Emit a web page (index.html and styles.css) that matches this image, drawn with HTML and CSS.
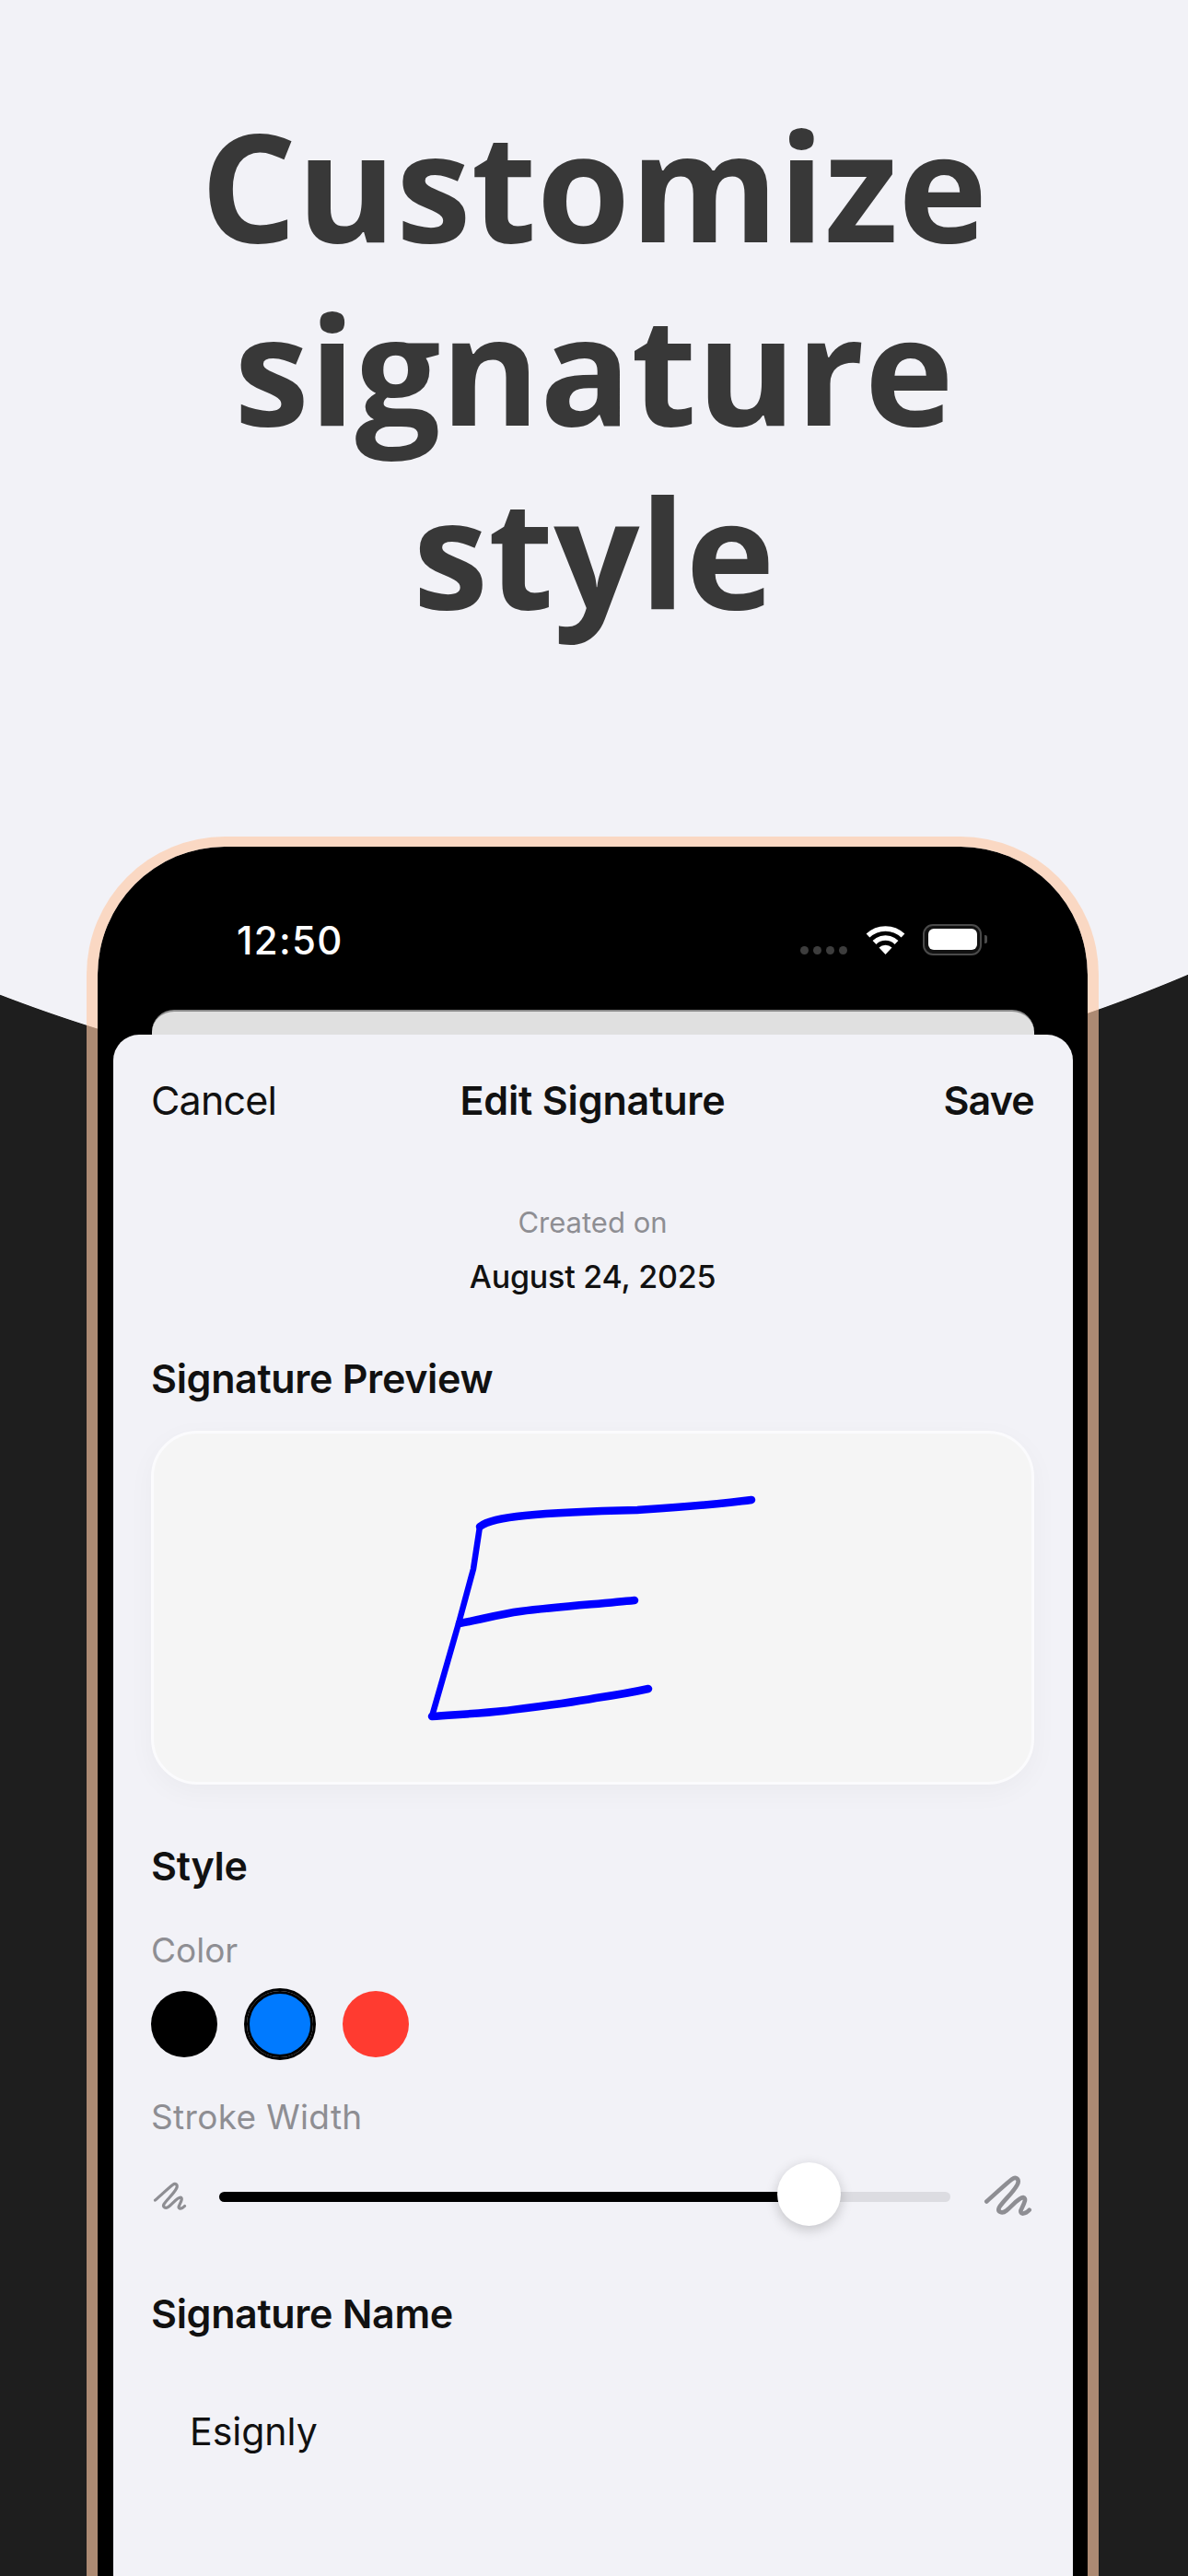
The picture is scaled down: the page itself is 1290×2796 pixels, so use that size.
FILE: index.html
```html
<!DOCTYPE html>
<html lang="en">
<head>
<meta charset="utf-8">
<title>Customize signature style</title>
<link rel="stylesheet" href="styles.css">
</head>
<body>
<main class="page">
  <h1 class="headline">Customize<br>signature<br>style</h1>
  <section class="phone">
    <div class="screen">
      <div class="status">
        <span class="time">12:50</span>
        <div class="status-icons">
          <div class="dots"><i></i><i></i><i></i><i></i></div>
          <svg class="wifi" viewBox="0 0 43 33"><path d="M21.5 33 14.500 25.500a10 10 0 0 1 14 0Z" fill="#fff"/><path d="M9.500 20a17 17 0 0 1 24 0" fill="none" stroke="#fff" stroke-width="5.500"/><path d="M2.500 12.500a27.500 27.500 0 0 1 38 0" fill="none" stroke="#fff" stroke-width="5.500"/></svg>
          <div class="battery"><div class="battery-fill"></div></div>
          <div class="battery-cap"></div>
        </div>
      </div>
      <div class="sheet-back"></div>
      <div class="sheet">
        <nav class="nav">
          <span class="nav-cancel">Cancel</span>
          <span class="nav-title">Edit Signature</span>
          <span class="nav-save">Save</span>
        </nav>
        <div class="created">
          <span class="created-label">Created on</span>
          <span class="created-date">August 24, 2025</span>
        </div>
        <h2 class="heading heading-preview">Signature Preview</h2>
        <div class="preview">
          <svg class="drawing" viewBox="166 1553 955 384">
            <path d="M521 1657C530 1650 548 1647 570 1645C610 1641 650 1640 692 1639C735 1636 780 1633 816 1628"/>
            <path class="drawing-stem" d="M521 1657L514 1703L498 1762L469 1863"/>
            <path d="M499 1762C522 1758 542 1752 565 1749C605 1744 650 1741 689 1737"/>
            <path d="M469 1863C495 1861 520 1860 547 1857C580 1853 615 1849 647 1843C668 1840 686 1837 704 1833"/>
          </svg>
        </div>
        <h2 class="heading heading-style">Style</h2>
        <div class="label label-color">Color</div>
        <div class="swatches">
          <span class="swatch swatch-black"></span>
          <span class="swatch swatch-blue"></span>
          <span class="swatch swatch-red"></span>
        </div>
        <div class="label label-stroke">Stroke Width</div>
        <div class="slider-row">
          <svg class="scribble scribble-small" viewBox="85 60 160 140"><path d="M95 148C125 122 160 88 178 75C192 65 204 75 196 92C182 120 150 145 136 168C130 182 145 190 160 178C180 162 200 135 215 135C230 137 212 165 207 178C205 192 222 190 235 176"/></svg>
          <div class="slider">
            <div class="track-fill"></div>
            <div class="thumb"></div>
            <div class="track-rest"></div>
          </div>
          <svg class="scribble scribble-big" viewBox="85 60 160 140"><path d="M95 148C125 122 160 88 178 75C192 65 204 75 196 92C182 120 150 145 136 168C130 182 145 190 160 178C180 162 200 135 215 135C230 137 212 165 207 178C205 192 222 190 235 176"/></svg>
        </div>
        <h2 class="heading heading-name">Signature Name</h2>
        <div class="name-value">Esignly</div>
      </div>
    </div>
  </section>
</main>
</body>
</html>
```
FILE: styles.css
```css
* { box-sizing: border-box; }
html, body { margin: 0; padding: 0; }
body {
  width: 1290px;
  height: 2796px;
  overflow: hidden;
  font-family: Inter, "Liberation Sans", sans-serif;
  background: radial-gradient(circle 1720px at 618px -525px, #f2f2f7 99.95%, #1e1e1e 100%);
}
.page { height: 2796px; overflow: hidden; display: flex; flex-direction: column; }
.headline {
  margin: 0;
  padding-top: 100px;
  height: 908px;
  font-family: "Open Sans", sans-serif;
  font-weight: 700;
  font-size: 164px;
  line-height: 199px;
  color: #383838;
  text-align: center;
  flex: none;
}
.phone {
  flex: none;
  width: 1099px;
  height: 1950px;
  margin-left: 94px;
  border: solid rgba(255, 201, 164, .63);
  border-width: 11px 12px 12px;
  border-radius: 150px 150px 0 0;
  background: #000;
  background-clip: padding-box;
}
.screen {
  height: 100%;
  padding: 0 16px 0 17px;
  display: flex;
  flex-direction: column;
  overflow: hidden;
  border-radius: 138px 138px 0 0;
}
.status {
  flex: none;
  height: 177px;
  padding: 77px 0 0 134px;
  display: flex;
  justify-content: space-between;
  color: #fff;
}
.time { font-size: 42px; line-height: 50px; font-weight: 500; letter-spacing: 1.3px; }
.status-icons { display: flex; align-items: flex-start; padding: 7px 93px 0 0; }
.dots { display: flex; gap: 5px; margin: 24px 20px 0 0; }
.dots i { width: 9px; height: 9px; border-radius: 50%; background: #3d3d3d; }
.wifi { width: 43px; height: 33px; margin-right: 19px; }
.battery {
  width: 64px; height: 34px; padding: 3px 3px 4px 4px;
  border: 2px solid #4a4a4a; border-radius: 11px; background: #111;
}
.battery-fill { height: 100%; background: #fff; border-radius: 6px; }
.battery-cap { width: 3px; height: 9px; margin: 12px 0 0 3px; background: #4a4a4a; border-radius: 0 2px 2px 0; }
.sheet-back {
  flex: none;
  height: 27px;
  margin: 0 42px;
  background: #e0e0e0;
  border-top: 2px solid #8a8a8a;
  border-radius: 24px 24px 0 0;
}
.sheet {
  flex: 1;
  min-height: 0;
  padding: 0 42px 0 41px;
  background: #f2f2f7;
  border-radius: 28px 28px 0 0;
  color: #111;
  display: flex;
  flex-direction: column;
}
.nav {
  flex: none;
  padding-top: 44px;
  height: 98px;
  line-height: 54px;
  font-size: 43px;
  display: grid;
  grid-template-columns: 1fr auto 1fr;
}
.nav-cancel { letter-spacing: -.8px; }
.nav-title { font-weight: 600; letter-spacing: -.15px; }
.nav-save { font-weight: 600; letter-spacing: -.8px; text-align: right; }
.created { margin-top: 86px; display: flex; flex-direction: column; align-items: center; flex: none; }
.created-label { font-size: 31px; line-height: 40px; color: #8e8e93; }
.created-date { margin-top: 18px; font-size: 34px; line-height: 42px; font-weight: 500; letter-spacing: -.2px; }
.heading { margin: 0; flex: none; font-size: 43px; line-height: 52px; font-weight: 600; letter-spacing: -.33px; color: #111; }
.heading-preview { margin-top: 63px; }
.preview {
  flex: none;
  height: 384px;
  margin-top: 31px;
  background: #f5f5f5;
  border: 3px solid #fbfbfd;
  border-radius: 50px;
  box-shadow: 0 8px 30px rgba(0, 0, 0, .035);
}
.drawing { display: block; width: 955px; height: 384px; margin: -3px 0 0 -1px; fill: none; stroke: #0000ff; stroke-width: 8.5px; stroke-linecap: round; stroke-linejoin: round; }
.drawing-stem { stroke-width: 6.5px; }
.heading-style { margin-top: 62px; }
.label { flex: none; font-size: 37px; line-height: 46px; color: #8e8e93; }
.label-color { margin-top: 43px; }
.swatches { flex: none; display: flex; gap: 32px; margin-top: 21px; height: 72px; }
.swatch { width: 72px; height: 72px; border-radius: 50%; }
.swatch-black { background: #000; }
.swatch-blue { background: #007aff; border: 3px solid #000; outline: 3px solid #000; outline-offset: -.5px; }
.swatch-red { background: #ff3b30; }
.label-stroke { margin-top: 42px; letter-spacing: .35px; }
.slider-row { flex: none; display: flex; align-items: center; height: 70px; margin-top: 25px; }
.scribble { fill: none; stroke: #8e8e93; stroke-width: 14px; stroke-linecap: round; stroke-linejoin: round; flex: none; margin-top: 5px; }
.scribble-small { width: 37px; height: 32px; margin-left: 2px; }
.slider { flex: none; display: flex; align-items: center; width: 794px; height: 70px; margin-left: 35px; }
.track-fill { width: 607px; height: 11px; margin-top: 7px; background: #000; border-radius: 6px 0 0 6px; }
.thumb { flex: none; width: 69px; height: 69px; margin: 0 -1px; background: #fff; border-radius: 50%; box-shadow: 0 4px 14px rgba(0, 0, 0, .2); position: relative; }
.track-rest { flex: 1; height: 11px; margin-top: 7px; background: #dcdce1; border-radius: 0 6px 6px 0; }
.scribble-big { width: 53px; height: 47px; margin-left: 36px; }
.heading-name { margin-top: 69px; }
.name-value { flex: none; margin-top: 75px; padding-left: 42px; font-size: 41px; line-height: 54px; }
```
